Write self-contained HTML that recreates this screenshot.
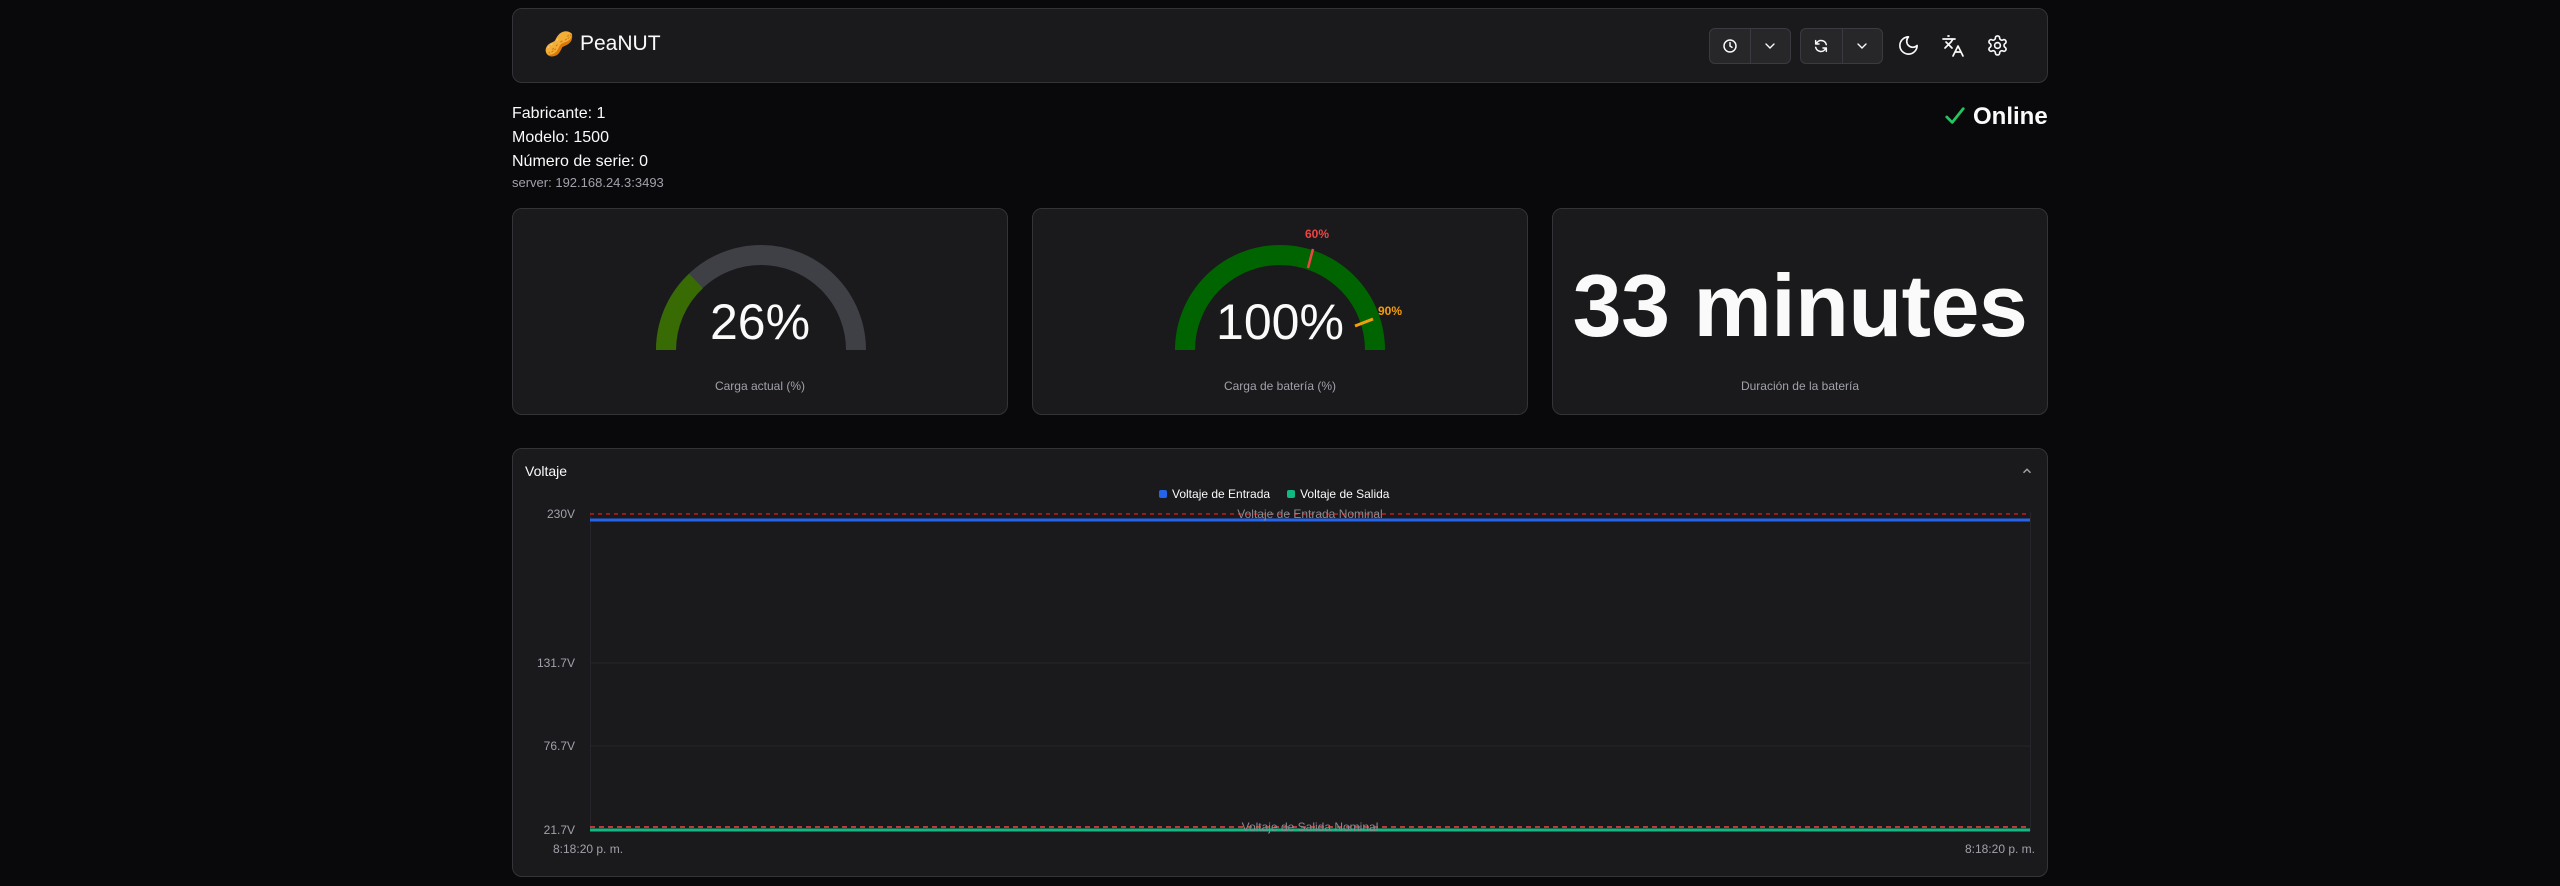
<!DOCTYPE html>
<html><head><meta charset="utf-8"><style>
*{box-sizing:border-box;margin:0;padding:0}
body{width:2560px;height:886px;background:#09090b;color:#fafafa;font-family:"Liberation Sans","DejaVu Sans",sans-serif;position:relative;overflow:hidden}
.abs{position:absolute}
.box{position:absolute;background:#1a1a1c;border:1px solid #333338;border-radius:10px}
.lbl{position:absolute;width:100%;text-align:center;top:170px;font-size:12px;color:#a1a1aa}
.btn{position:absolute;top:28px;height:36px;border:1px solid #3a3a40;border-radius:6px;background:#27272a;display:flex}
.btn div{width:41px;height:100%;display:flex;align-items:center;justify-content:center}
.btn div+div{border-left:1px solid #3a3a40}
.yl{position:absolute;right:1985px;font-size:12px;color:#a1a1aa;text-align:right}
</style></head><body>
<div class="box" style="left:512px;top:8px;width:1536px;height:75px"></div>
<div class="abs" style="left:544px;top:30px;font-size:24px">🥜</div>
<div class="abs" style="left:580px;top:32px;font-size:21px">PeaNUT</div>
<div class="btn" style="left:1709px;width:82px">
<div><svg width="16" height="16" viewBox="0 0 24 24" fill="none" stroke="#fafafa" stroke-width="2.2" stroke-linecap="round"><circle cx="12" cy="12" r="9"/><path d="M12 7v5l3 2"/></svg></div>
<div><svg width="16" height="16" viewBox="0 0 24 24" fill="none" stroke="#fafafa" stroke-width="2" stroke-linecap="round"><path d="M6 9l6 6 6-6"/></svg></div></div>
<div class="btn" style="left:1800px;width:83px">
<div><svg width="16" height="16" viewBox="0 0 24 24" fill="none" stroke="#fafafa" stroke-width="2.2" stroke-linecap="round" stroke-linejoin="round"><path d="M20 10A8 8 0 0 0 5.5 7.5L4 9M4 4v5h5M4 14a8 8 0 0 0 14.5 2.5L20 15M20 20v-5h-5"/></svg></div>
<div><svg width="16" height="16" viewBox="0 0 24 24" fill="none" stroke="#fafafa" stroke-width="2" stroke-linecap="round"><path d="M6 9l6 6 6-6"/></svg></div></div>
<svg class="abs" style="left:1897px;top:34px" width="23" height="23" viewBox="0 0 24 24" fill="none" stroke="#fafafa" stroke-width="1.7" stroke-linecap="round" stroke-linejoin="round"><path d="M12 3a6 6 0 0 0 9 9 9 9 0 1 1-9-9z"/></svg>
<svg class="abs" style="left:1941px;top:34px" width="24" height="24" viewBox="0 0 24 24" fill="none" stroke="#fafafa" stroke-width="1.7" stroke-linecap="round" stroke-linejoin="round"><path d="M5 8l6 6M4 14l6-6 2-3M2 5h12M7 2h1M22 22l-5-10-5 10M14 18h6"/></svg>
<svg class="abs" style="left:1986px;top:34px" width="23" height="23" viewBox="0 0 24 24" fill="none" stroke="#fafafa" stroke-width="1.7" stroke-linecap="round" stroke-linejoin="round"><path d="M12.2 2h-.4a2 2 0 0 0-2 2v.2a2 2 0 0 1-1 1.7l-.4.3a2 2 0 0 1-2 0l-.2-.1a2 2 0 0 0-2.7.7l-.2.4a2 2 0 0 0 .7 2.7l.2.1a2 2 0 0 1 1 1.7v.5a2 2 0 0 1-1 1.7l-.2.1a2 2 0 0 0-.7 2.7l.2.4a2 2 0 0 0 2.7.7l.2-.1a2 2 0 0 1 2 0l.4.3a2 2 0 0 1 1 1.7v.2a2 2 0 0 0 2 2h.4a2 2 0 0 0 2-2v-.2a2 2 0 0 1 1-1.7l.4-.3a2 2 0 0 1 2 0l.2.1a2 2 0 0 0 2.7-.7l.2-.4a2 2 0 0 0-.7-2.7l-.2-.1a2 2 0 0 1-1-1.7v-.5a2 2 0 0 1 1-1.7l.2-.1a2 2 0 0 0 .7-2.7l-.2-.4a2 2 0 0 0-2.7-.7l-.2.1a2 2 0 0 1-2 0l-.4-.3a2 2 0 0 1-1-1.7V4a2 2 0 0 0-2-2z"/><circle cx="12" cy="12" r="3"/></svg>
<div class="abs" style="left:512px;top:102px;font-size:16px;line-height:24px">Fabricante: 1<br>Modelo: 1500<br>Número de serie: 0</div>
<div class="abs" style="left:512px;top:175px;font-size:13px;color:#a1a1aa">server: 192.168.24.3:3493</div>
<svg class="abs" style="left:1944px;top:105px" width="22" height="22" viewBox="0 0 24 24" fill="none" stroke="#22c55e" stroke-width="3" stroke-linecap="round" stroke-linejoin="round"><path d="M3 13l6 6L21 4"/></svg>
<div class="abs" style="left:1973px;top:103px;font-size:24px;font-weight:bold">Online</div>

<div class="box" style="left:512px;top:208px;width:496px;height:207px">
<svg class="abs" style="left:0;top:0" width="496" height="207"><path d="M153 141A95 95 0 0 1 343 141" fill="none" stroke="#3f3f46" stroke-width="20"/><path d="M153 141A95 95 0 0 1 183 72" fill="none" stroke="#386b04" stroke-width="20"/></svg>
<div class="abs" style="width:100%;text-align:center;top:84px;font-size:50px">26%</div>
<div class="lbl">Carga actual (%)</div></div>

<div class="box" style="left:1032px;top:208px;width:496px;height:207px">
<svg class="abs" style="left:0;top:0" width="496" height="207"><path d="M152 141A95 95 0 0 1 342 141" fill="none" stroke="#006400" stroke-width="20"/><line x1="280" y1="40" x2="275" y2="59" stroke="#ef4444" stroke-width="2.5"/><line x1="340" y1="110" x2="322" y2="117" stroke="#f59e0b" stroke-width="3"/><text x="284" y="29" fill="#ef4444" font-size="12" font-weight="bold" text-anchor="middle" font-family="Liberation Sans">60%</text><text x="345" y="106" fill="#f59e0b" font-size="12" font-weight="bold" font-family="Liberation Sans">90%</text></svg>
<div class="abs" style="width:100%;text-align:center;top:84px;font-size:50px">100%</div>
<div class="lbl">Carga de batería (%)</div></div>

<div class="box" style="left:1552px;top:208px;width:496px;height:207px">
<div class="abs" style="width:100%;text-align:center;top:46px;font-size:88px;font-weight:bold;letter-spacing:-0.5px">33 minutes</div>
<div class="lbl">Duración de la batería</div></div>

<div class="box" style="left:512px;top:448px;width:1536px;height:429px"></div>
<div class="abs" style="left:525px;top:463px;font-size:14px">Voltaje</div>
<svg class="abs" style="left:2019px;top:464px" width="16" height="14" viewBox="0 0 24 24" fill="none" stroke="#a1a1aa" stroke-width="2.5"><path d="M6 15l6-6 6 6"/></svg>
<div class="abs" style="left:1159px;top:487px;font-size:12px;display:flex;align-items:center;gap:5px"><span style="width:8px;height:8px;background:#2563eb;display:inline-block;border-radius:2px"></span>Voltaje de Entrada<span style="width:8px;height:8px;background:#10b981;display:inline-block;margin-left:12px;border-radius:2px"></span>Voltaje de Salida</div>
<svg class="abs" style="left:0;top:0" width="2560" height="886">
<g stroke="#26262a" stroke-width="1"><line x1="590" y1="663" x2="2030" y2="663"/><line x1="590" y1="746" x2="2030" y2="746"/><line x1="590.5" y1="512" x2="590.5" y2="831"/><line x1="2030.5" y1="512" x2="2030.5" y2="831"/></g>
<line x1="590" y1="514" x2="2030" y2="514" stroke="#991b1b" stroke-width="2" stroke-dasharray="4 4"/>
<line x1="590" y1="520" x2="2030" y2="520" stroke="#2563eb" stroke-width="3"/>
<line x1="590" y1="827" x2="2030" y2="827" stroke="#ef4444" stroke-width="1.5" stroke-dasharray="5 4"/>
<line x1="590" y1="830" x2="2030" y2="830" stroke="#10b981" stroke-width="3"/>
<text x="1310" y="518" fill="#8a8a92" font-size="12" text-anchor="middle" font-family="Liberation Sans">Voltaje de Entrada Nominal</text>
<text x="1310" y="831" fill="#8a8a92" font-size="12" text-anchor="middle" font-family="Liberation Sans">Voltaje de Salida Nominal</text>
</svg>
<div class="yl" style="top:507px">230V</div>
<div class="yl" style="top:656px">131.7V</div>
<div class="yl" style="top:739px">76.7V</div>
<div class="yl" style="top:823px">21.7V</div>
<div class="abs" style="left:553px;top:842px;font-size:12px;color:#a1a1aa">8:18:20 p. m.</div>
<div class="abs" style="right:525px;top:842px;font-size:12px;color:#a1a1aa">8:18:20 p. m.</div>
</body></html>
